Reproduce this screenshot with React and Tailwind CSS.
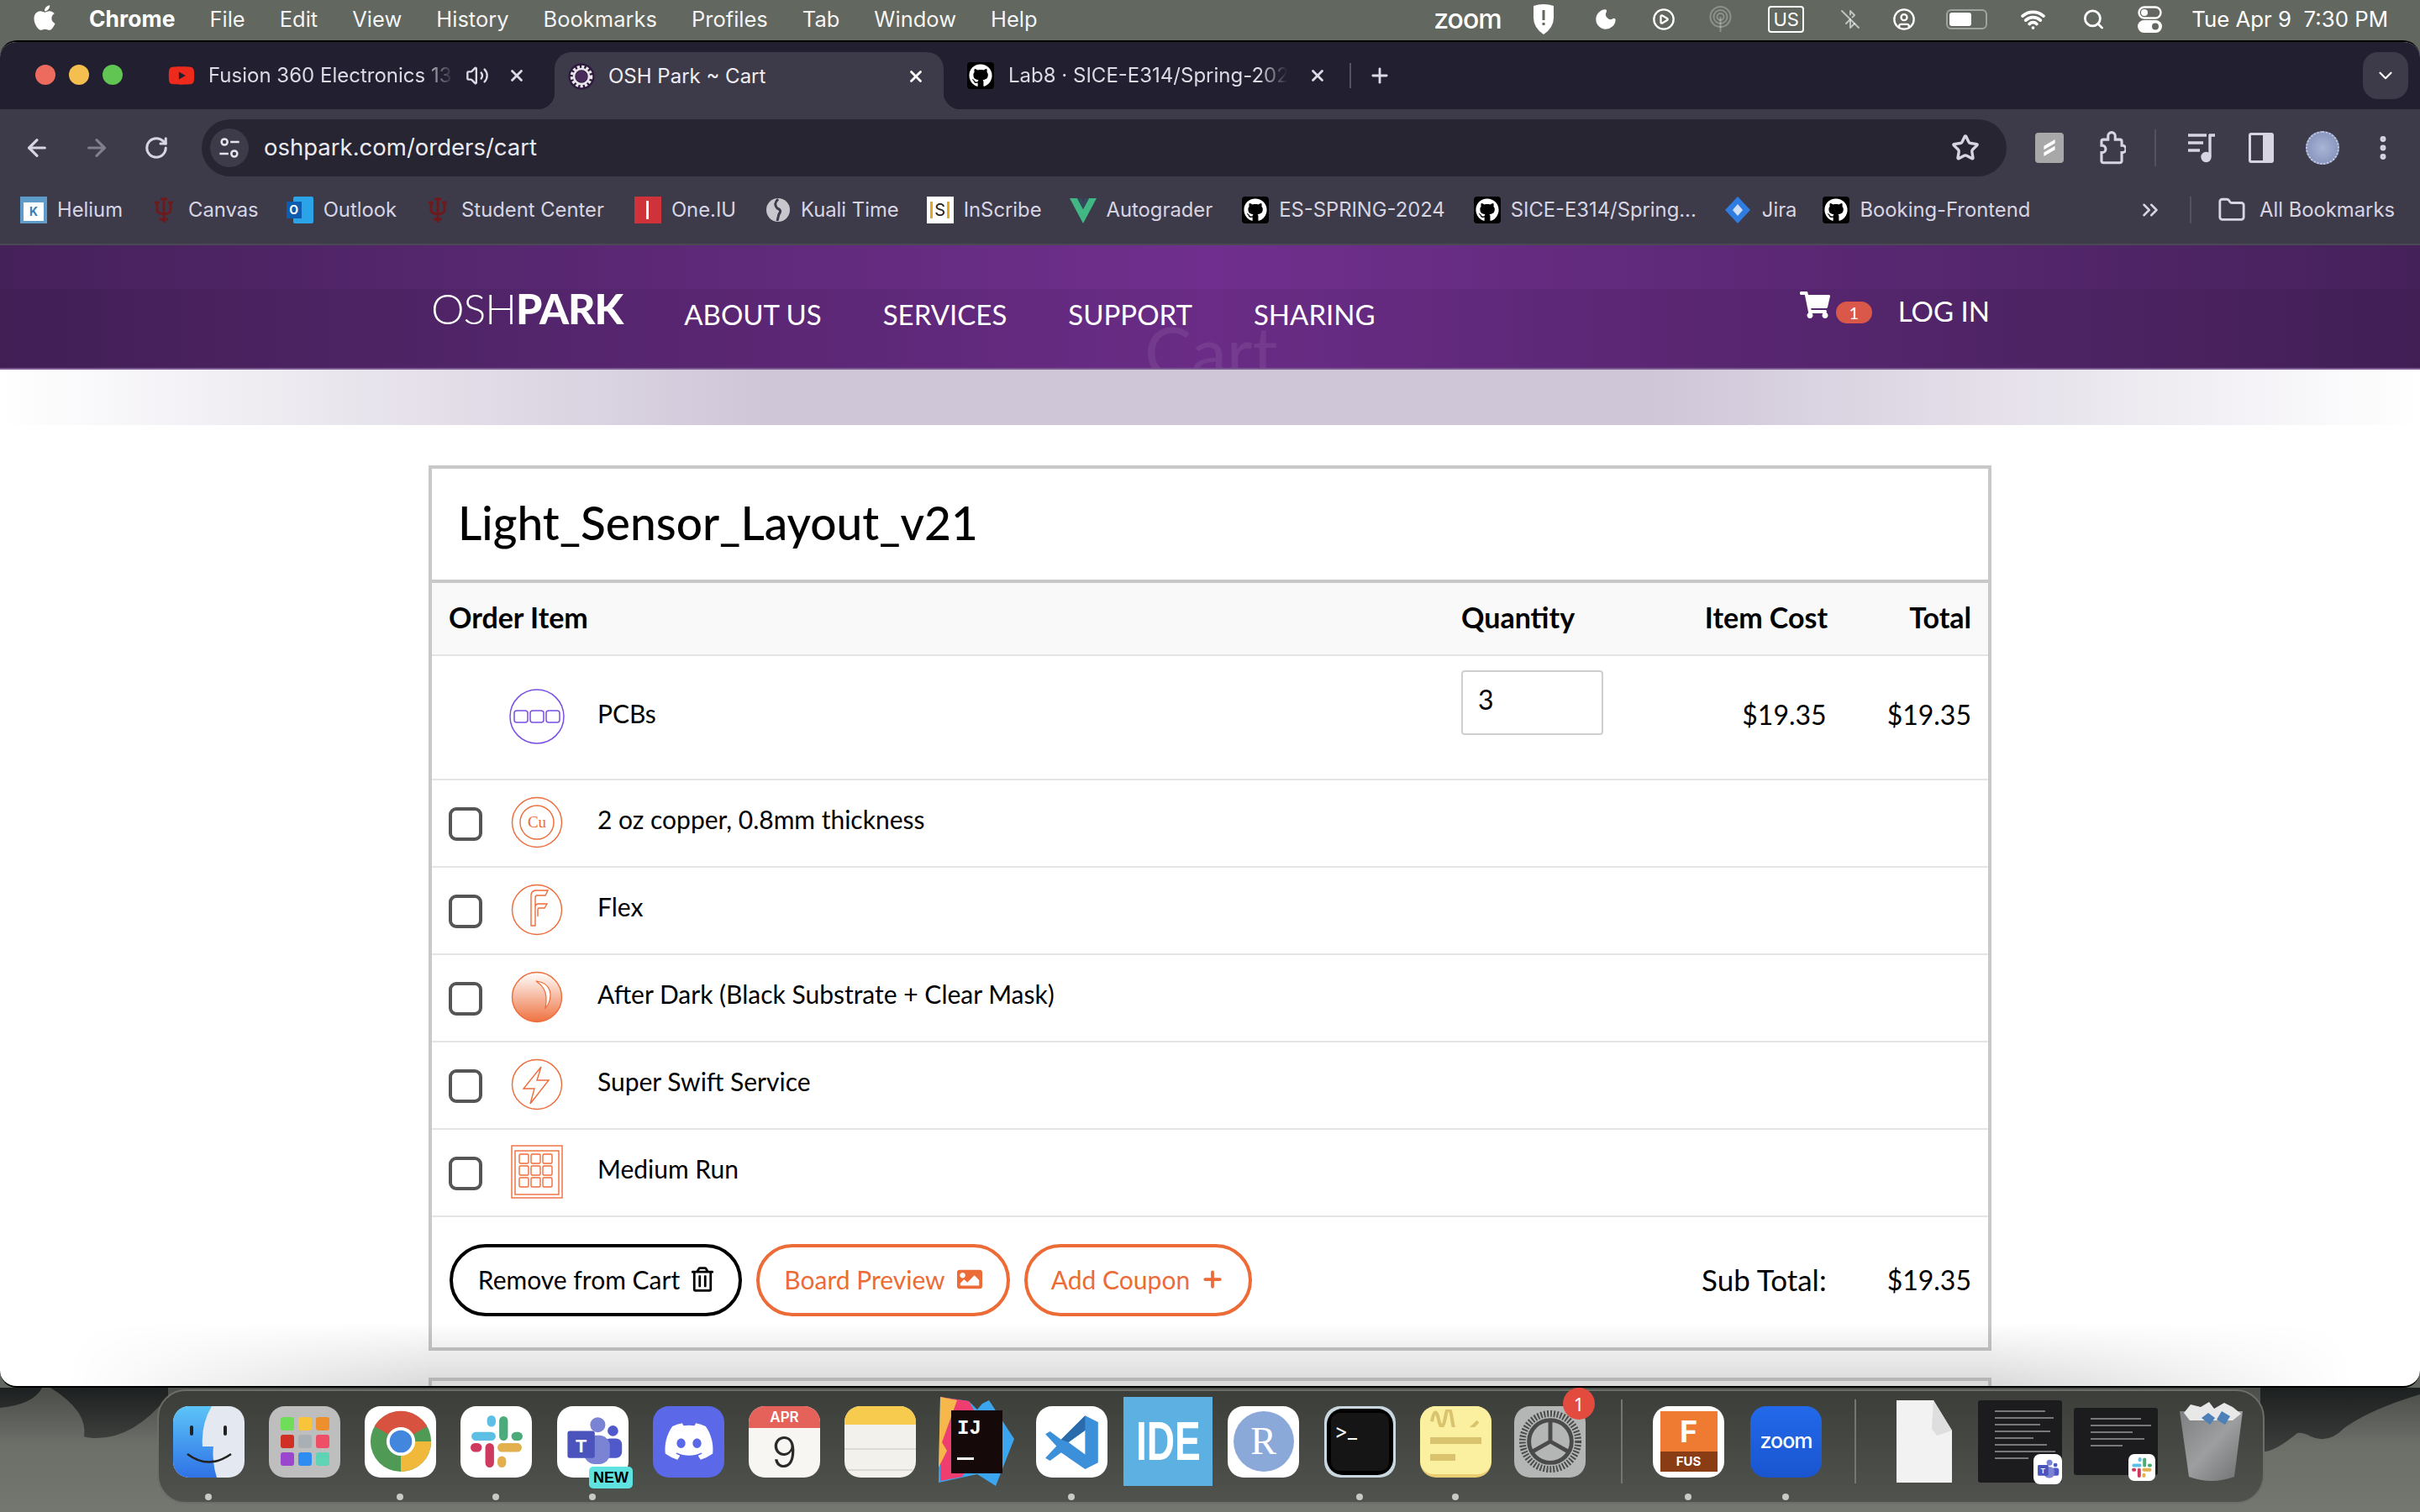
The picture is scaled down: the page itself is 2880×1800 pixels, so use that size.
import React from 'react';
import {
    ArrowLeft,
    ArrowRight,
    RotateCw,
    Star,
    EllipsisVertical,
    ChevronDown,
    ChevronsRight,
    Folder,
    Plus,
    X,
    Volume2,
    Moon,
    CirclePlay,
    CircleUser,
    Wifi,
    Search,
    BluetoothOff
} from 'lucide-react';
import { FaApple, FaGithub, FaDiscord, FaYoutube, FaShoppingCart, FaImage, FaRegTrashAlt } from 'react-icons/fa';

const ui = 'font-["Inter","Liberation_Sans",sans-serif]';
const page = 'font-["Lato","Open_Sans",sans-serif]';

const menuItems = ['File', 'Edit', 'View', 'History', 'Bookmarks', 'Profiles', 'Tab', 'Window', 'Help'];

const GithubFav = () => (
    <span className="w-[32px] h-[32px] rounded-[4px] bg-black flex items-center justify-center shrink-0">
        <FaGithub className="w-[28px] h-[28px] text-white" />
    </span>
);

const Trident = () => (
    <svg viewBox="0 0 24 32" className="w-[24px] h-[32px] shrink-0" fill="none" stroke="#6e1a1d" strokeWidth="3">
        <path d="M12 1v30M7 27h10M4 7v9q0 4 8 5q8-1 8-5V7M1 7h6M17 7h6M8 3h8" />
    </svg>
);

const MenuBar = () => (
    <div className={`h-[48px] bg-[#62675f] flex items-center text-white text-[25.5px] shrink-0 pb-[2px] ${ui}`}>
        <FaApple className="ml-[38px] w-[30px] h-[34px] mb-[4px]" />
        <span className="ml-[38px] text-[26.5px] font-bold">Chrome</span>
        {menuItems.map((label) => (
            <span key={label} className="ml-[41px] text-white/95">{label}</span>
        ))}
        <div className="ml-auto flex items-center">
            <span className="w-[81px] text-[32px] leading-none font-medium tracking-[-1px] whitespace-nowrap">zoom</span>
            <svg viewBox="0 0 26 38" className="ml-[37px] w-[26px] h-[38px]"><path d="M1 3q12-4 24 0v14q0 12-12 20Q1 29 1 17z" fill="#fff" /><rect x="11.5" y="8" width="3" height="12" fill="#62675f" /><rect x="11.5" y="23" width="3" height="3" fill="#62675f" /></svg>
            <Moon className="ml-[47px] w-[28px] h-[30px] fill-white" />
            <CirclePlay className="ml-[41px] w-[28px] h-[30px]" />
            <svg viewBox="0 0 29 32" className="ml-[39px] w-[29px] h-[32px]" fill="none" stroke="#fff" strokeOpacity="0.28" strokeWidth="2">
                <circle cx="14.5" cy="13" r="12" /><circle cx="14.5" cy="13" r="8" /><circle cx="14.5" cy="13" r="4" /><path d="M14.5 13v18" />
            </svg>
            <span className="ml-[42px] w-[43px] h-[32px] border-[2px] border-white rounded-[4px] text-[22px] leading-none flex items-center justify-center">US</span>
            <BluetoothOff className="ml-[43px] w-[24px] h-[30px] text-white/60" />
            <CircleUser className="ml-[38px] w-[28px] h-[30px]" />
            <span className="ml-[36px] w-[49px] h-[24px] rounded-[6px] border-[2px] border-white/40 p-[2px] flex">
                <span className="w-[26px] rounded-[3px] bg-white" />
            </span>
            <Wifi className="ml-[39px] w-[31px] h-[30px]" strokeWidth={3} />
            <Search className="ml-[43px] w-[27px] h-[28px]" strokeWidth={2.5} />
            <svg viewBox="0 0 29 32" className="ml-[39px] w-[29px] h-[32px]">
                <rect x="1.5" y="1.5" width="26" height="13" rx="6.5" fill="none" stroke="#fff" strokeWidth="2.4" />
                <circle cx="8" cy="8" r="4" fill="#fff" />
                <rect x="0" y="17" width="29" height="15" rx="7.5" fill="#fff" />
                <circle cx="21" cy="24.5" r="4" fill="#62675f" />
            </svg>
            <span className="ml-[35px] mr-[38px] text-[25.8px] whitespace-pre">Tue Apr 9  7:30 PM</span>
        </div>
    </div>
);

const TabStrip = () => (
    <div className={`h-[80px] bg-[#211f30] flex text-[#dcdae4] text-[24px] shrink-0 ${ui}`}>
        <div className="flex items-center gap-[16px] ml-[42px] mb-[2px]">
            <span className="w-[24px] h-[24px] rounded-full bg-[#ec6a5e]" />
            <span className="w-[24px] h-[24px] rounded-full bg-[#f4bf4f]" />
            <span className="w-[24px] h-[24px] rounded-full bg-[#61c554]" />
        </div>
        {/* Inactive YouTube tab */}
        <div className="flex items-center ml-[54px] w-[460px]">
            <FaYoutube className="w-[32px] h-[32px] text-[#ee2a1c]" />
            <span className="ml-[16px] w-[292px] overflow-hidden whitespace-nowrap [mask-image:linear-gradient(90deg,black_88%,transparent)]">Fusion 360 Electronics 13</span>
            <Volume2 className="ml-[14px] w-[28px] h-[28px]" />
            <X className="ml-[22px] w-[22px] h-[22px]" strokeWidth={3} />
        </div>
        {/* Active tab */}
        <div className="relative mt-[12px] w-[463px] h-[68px] rounded-t-[20px] bg-[#3d3a4a] flex items-center pl-[16px] pb-[10px]">
            <span className="absolute left-[-20px] bottom-0 w-[20px] h-[20px] bg-[radial-gradient(circle_at_0_0,#211f30_20px,#3d3a4a_20.5px)]" />
            <span className="absolute right-[-20px] bottom-0 w-[20px] h-[20px] bg-[radial-gradient(circle_at_100%_0,#211f30_20px,#3d3a4a_20.5px)]" />
            <svg viewBox="0 0 32 32" className="w-[32px] h-[32px]">
                <circle cx="16" cy="16" r="15.5" fill="#2d1a3d" />
                <circle cx="16" cy="16" r="11.5" fill="none" stroke="#e8e6ea" strokeWidth="3.6" strokeDasharray="3.2 2.2" />
                <circle cx="16" cy="16" r="9" fill="none" stroke="#e8e6ea" strokeWidth="2.6" />
                <circle cx="16" cy="16" r="7" fill="#4a2c5c" />
            </svg>
            <span className="ml-[16px] text-[#f0eef4]">OSH Park ~ Cart</span>
            <X className="ml-auto mr-[22px] w-[22px] h-[22px] text-white" strokeWidth={3} />
        </div>
        {/* GitHub tab */}
        <div className="flex items-center ml-[28px]">
            <GithubFav />
            <span className="ml-[17px] w-[332px] overflow-hidden whitespace-nowrap [mask-image:linear-gradient(90deg,black_90%,transparent)]">Lab8 · SICE-E314/Spring-2024</span>
            <X className="ml-[25px] w-[22px] h-[22px]" strokeWidth={3} />
            <span className="ml-[27px] w-[2px] h-[30px] bg-[#55525f]" />
            <Plus className="ml-[20px] w-[28px] h-[28px]" strokeWidth={2.4} />
        </div>
        <div className="ml-auto mr-[14px] mt-[12px] w-[54px] h-[56px] rounded-[18px] bg-[#3d3a4a] flex items-center justify-center">
            <ChevronDown className="w-[26px] h-[26px] text-white" />
        </div>
    </div>
);

const Toolbar = () => (
    <div className="h-[92px] bg-[#3d3a4a] flex items-center text-[#d8d5e2] shrink-0">
        <ArrowLeft className="ml-[28px] w-[32px] h-[32px]" strokeWidth={2.4} />
        <ArrowRight className="ml-[39px] w-[32px] h-[32px] text-[#827f8c]" strokeWidth={2.4} />
        <RotateCw className="ml-[40px] w-[30px] h-[30px]" strokeWidth={2.4} />
        <div className="ml-[39px] w-[2148px] h-[68px] rounded-full bg-[#282533] flex items-center">
            <span className="ml-[10px] w-[46px] h-[46px] rounded-full bg-[#3d3a4a] flex items-center justify-center">
                <svg viewBox="0 0 24 24" className="w-[28px] h-[28px]" fill="none" stroke="#e4e2ea" strokeWidth="2.2">
                    <circle cx="7" cy="6" r="3" /><path d="M13 6h9M2 18h9" /><circle cx="17" cy="18" r="3" />
                </svg>
            </span>
            <span className={`ml-[18px] text-[27.5px] text-[#ecebf1] ${ui}`}>oshpark.com/orders/cart</span>
            <Star className="ml-auto mr-[32px] w-[34px] h-[34px]" strokeWidth={2.4} />
        </div>
        <span className="ml-[34px] w-[34px] h-[36px] rounded-[4px] bg-[#a8a8a8] flex items-center justify-center">
            <svg viewBox="0 0 20 20" className="w-[22px] h-[26px]"><path d="M16 1 4 8v4l12-7zM16 8 4 15v4l12-7z" fill="#fff" /></svg>
        </span>
        <svg viewBox="0 0 24 28" className="ml-[40px] w-[34px] h-[40px]" fill="none" stroke="currentColor" strokeWidth="2.2">
            <path d="M5 7h4V4a3 3 0 0 1 6 0v3h4a1.5 1.5 0 0 1 1.500 1.500V12h.5a3 3 0 0 1 0 6h-.5v7a1.500 1.500 0 0 1-1.500 1.500H5A1.500 1.500 0 0 1 3.500 25v-7H4a3 3 0 0 0 0-6h-.5V8.500A1.500 1.500 0 0 1 5 7z" />
        </svg>
        <span className="ml-[34px] w-[2px] h-[44px] bg-[#55525f]" />
        <svg viewBox="0 0 32 36" className="ml-[38px] w-[32px] h-[36px]" fill="none" stroke="currentColor" strokeWidth="3.4">
            <path d="M0 3h22M0 12h18M0 21h14M26 2v26" />
            <circle cx="21.500" cy="29" r="4.500" fill="currentColor" />
            <path d="M25 3h7" />
        </svg>
        <span className="ml-[40px] w-[30px] h-[36px] rounded-[3px] border-[3px] border-[#d8d5e2] flex justify-end">
            <span className="w-[10px] bg-[#d8d5e2]" />
        </span>
        <span className="ml-[38px] w-[40px] h-[40px] rounded-full bg-[radial-gradient(circle,#a9b4d6,#7f8cb6)] border-[2px] border-dotted border-[#c7cde2]" />
        <EllipsisVertical className="ml-[34px] w-[36px] h-[36px]" strokeWidth={2.6} />
    </div>
);

const BookmarkText = ({ children, className }) => (
    <span className={`whitespace-nowrap ${className || 'ml-[12px]'}`}>{children}</span>
);

const BookmarksBar = () => (
    <div className={`h-[70px] bg-[#3d3a4a] flex items-center pb-[12px] text-[23.8px] text-[#d8d5e2] border-b-[2px] border-[#4a4852] shrink-0 ${ui}`}>
        <span className="ml-[24px] w-[32px] h-[32px] bg-[#5e9bc9] flex items-end justify-center">
            <span className="w-[24px] h-[22px] mb-[3px] bg-white text-[#3b7eb0] text-[14px] font-bold leading-[22px] text-center">K</span>
        </span>
        <BookmarkText>Helium</BookmarkText>
        <span className="ml-[37px]"><Trident /></span>
        <BookmarkText className="ml-[17px]">Canvas</BookmarkText>
        <span className="ml-[33px] w-[32px] h-[32px] flex items-center relative">
            <span className="absolute right-0 top-0 w-[24px] h-[32px] bg-[#2ba3e8] rounded-[2px]" />
            <span className="relative w-[18px] h-[20px] bg-[#0c5cb0] text-white text-[14px] font-bold text-center leading-[20px]">O</span>
        </span>
        <BookmarkText>Outlook</BookmarkText>
        <span className="ml-[37px]"><Trident /></span>
        <BookmarkText className="ml-[16px]">Student Center</BookmarkText>
        <span className="ml-[36px] w-[32px] h-[32px] bg-[#cf3238] flex items-center justify-center">
            <span className="w-[3px] h-[22px] bg-white" />
        </span>
        <BookmarkText>One.IU</BookmarkText>
        <svg viewBox="0 0 30 32" className="ml-[35px] w-[30px] h-[32px]"><circle cx="15" cy="16" r="14" fill="#c9c7ce" /><path d="M15 3q-6 6-1 11q6 2 2 7l-2 8" stroke="#3d3a4a" strokeWidth="3" fill="none" /></svg>
        <BookmarkText>Kuali Time</BookmarkText>
        <span className="ml-[33px] w-[32px] h-[32px] bg-white flex items-center justify-center text-[#222] text-[20px] leading-none">
            <span className="border-x-[3px] border-[#e2a82c] px-[2px]">S</span>
        </span>
        <BookmarkText>InScribe</BookmarkText>
        <svg viewBox="0 0 32 32" className="ml-[33px] w-[32px] h-[32px]"><path d="M0 2h9l7 13 7-13h9L16 32z" fill="#41b883" /><path d="M9 2h5l2 4 2-4h5l-7 13z" fill="#35495e" /></svg>
        <BookmarkText>Autograder</BookmarkText>
        <span className="ml-[35px]"><GithubFav /></span>
        <BookmarkText>ES-SPRING-2024</BookmarkText>
        <span className="ml-[34px]"><GithubFav /></span>
        <BookmarkText>SICE-E314/Spring...</BookmarkText>
        <svg viewBox="0 0 30 32" className="ml-[34px] w-[30px] h-[32px]"><path d="M15 0l15 16-15 16L0 16z" fill="#2f7de1" /><path d="M15 9l6 7-6 7-6-7z" fill="#cfe0f7" /></svg>
        <BookmarkText className="ml-[14px]">Jira</BookmarkText>
        <span className="ml-[31px]"><GithubFav /></span>
        <BookmarkText>Booking-Frontend</BookmarkText>
        <ChevronsRight className="ml-auto w-[30px] h-[30px]" />
        <span className="ml-[32px] w-[2px] h-[32px] bg-[#55525f]" />
        <Folder className="ml-[31px] w-[34px] h-[34px]" strokeWidth={2} />
        <BookmarkText className="ml-[16px] mr-[30px]">All Bookmarks</BookmarkText>
    </div>
);

const SiteHeader = () => (
    <div className={`relative h-[148px] shrink-0 overflow-hidden flex flex-col bg-[linear-gradient(90deg,#45215a_0%,#702f8e_50%,#45215a_100%)] border-b-[2px] border-[#7a5a90] text-white ${page}`}>
        <div className="h-[52px] shrink-0" />
        <div className="flex-1 bg-black/5 pl-[513px] pr-[512px] flex items-start">
            <span className="mt-[-5px] text-[50px] leading-[56px] tracking-[-1px] font-light">
                OSH<span className="font-black">PARK</span>
            </span>
            <span className="ml-[73px] mt-[7px] text-[33px] leading-[46px]">ABOUT US</span>
            <span className="ml-[73px] mt-[7px] text-[33px] leading-[46px]">SERVICES</span>
            <span className="ml-[73px] mt-[7px] text-[33px] leading-[46px]">SUPPORT</span>
            <span className="ml-[73px] mt-[7px] text-[33px] leading-[46px]">SHARING</span>
            <FaShoppingCart className="ml-auto mt-[3px] w-[36px] h-[32px]" />
            <span className="ml-[7px] mt-[15px] w-[43px] h-[26px] rounded-full bg-[#d9584a] text-[20px] leading-[26px] text-center">1</span>
            <span className="ml-[31px] mt-[3px] text-[33px] leading-[46px]">LOG IN</span>
        </div>
        <span className="absolute left-[1362px] top-[84px] text-[84px] leading-none text-white/[0.07]">Cart</span>
    </div>
);

const FadeBand = () => (
    <div className="h-[66px] shrink-0 bg-[linear-gradient(90deg,#ffffff_0%,#cfc6d8_32%,#cfc6d8_68%,#ffffff_100%)]" />
);

const Circle = ({ children }) => (
    <svg viewBox="0 0 66 66" className="w-[66px] h-[66px]" fill="none" stroke="#ee6c39" strokeWidth="1.4">
        <circle cx="33" cy="33" r="29.5" />
        {children}
    </svg>
);

const PcbIcon = () => (
    <svg viewBox="0 0 66 66" className="w-[66px] h-[66px]" fill="none" stroke="#7a4fe4" strokeWidth="1.5">
        <circle cx="33" cy="33" r="32" />
        <rect x="6" y="26" width="16" height="14" rx="3" />
        <rect x="25" y="26" width="16" height="14" rx="3" />
        <rect x="44" y="26" width="16" height="14" rx="3" />
    </svg>
);

const CopperIcon = () => (
    <Circle>
        <circle cx="33" cy="33" r="20" />
        <text x="33" y="39" textAnchor="middle" fontFamily="Liberation Serif, serif" fontSize="19" fill="#ee6c39" stroke="none">Cu</text>
    </Circle>
);

const FlexIcon = () => (
    <Circle>
        <path d="M26 52V16q0-5 5-6h15l-3 6H33q-2 0-2 3v33zM31 30q0-4 4-4h10l-3 5h-7q-1 0-1 2v8" />
    </Circle>
);

const AfterDarkIcon = () => (
    <svg viewBox="0 0 66 66" className="w-[66px] h-[66px]">
        <defs>
            <linearGradient id="afterDark" x1="0" y1="0" x2="0" y2="1">
                <stop offset="0" stopColor="#fff" />
                <stop offset="1" stopColor="#ee7240" />
            </linearGradient>
        </defs>
        <circle cx="33" cy="33" r="29.5" fill="url(#afterDark)" stroke="#ee6c39" strokeWidth="1.4" />
        <path d="M32 14q16 2 17 16q0 10-6 16q3-14-2-23q-3-5-9-9z" fill="#fff" stroke="#ee6c39" strokeWidth="1.2" />
    </svg>
);

const SwiftIcon = () => (
    <Circle>
        <path d="M38 12 17 38h13l-5 18 22-28H33z" />
    </Circle>
);

const MediumRunIcon = () => (
    <svg viewBox="0 0 66 66" className="w-[66px] h-[66px]" fill="none" stroke="#ee6c39" strokeWidth="1.4">
        <rect x="3" y="2" width="60" height="62" />
        <rect x="7" y="8" width="52" height="52" />
        {[12, 26, 40].map((y) => [12, 26, 40].map((x) => (
            <rect key={`${x}-${y}`} x={x} y={y} width="11" height="11" rx="1.5" />
        )))}
    </svg>
);

const options = [
    { label: '2 oz copper, 0.8mm thickness', Icon: CopperIcon },
    { label: 'Flex', Icon: FlexIcon },
    { label: 'After Dark (Black Substrate + Clear Mask)', Icon: AfterDarkIcon },
    { label: 'Super Swift Service', Icon: SwiftIcon },
    { label: 'Medium Run', Icon: MediumRunIcon }
];

const OptionRow = ({ label, Icon }) => (
    <div className="h-[104px] border-t-[2px] border-[#e4e4e4] flex items-center pl-[20px]">
        <span className="mt-[2px] w-[40px] h-[40px] rounded-[9px] border-[4px] border-[#555] bg-white shrink-0" />
        <span className="ml-[32px] mb-[2px] flex"><Icon /></span>
        <span className="ml-[39px] mb-[9px] text-[30px] text-black">{label}</span>
    </div>
);

const CartCard = () => (
    <div className={`w-[1860px] mx-auto border-[4px] border-[#c8c8c8] bg-white text-black ${page}`}>
        <div className="h-[136px] border-b-[4px] border-[#c8c8c8] flex items-center pl-[31px] pb-[4px]">
            <h1 className="text-[55px] font-medium leading-none">Light_Sensor_Layout_v21</h1>
        </div>
        <div className="h-[85px] bg-[#f9f9f9] flex items-center text-[34px] font-bold pl-[20px] pb-[4px]">
            <span className="w-[1205px]">Order Item</span>
            <span>Quantity</span>
            <span className="ml-auto mr-[97px]">Item Cost</span>
            <span className="mr-[20px]">Total</span>
        </div>
        {/* PCB row */}
        <div className="h-[148px] border-t-[2px] border-[#e4e4e4] flex">
            <div className="w-[1225px] pl-[92px] flex">
                <span className="mt-[39px] flex"><PcbIcon /></span>
                <span className="ml-[39px] mt-[48px] text-[30px] leading-[40px]">PCBs</span>
            </div>
            <div className="mt-[17px] w-[169px] h-[77px] rounded-[4px] border-[2px] border-[#cfcfcf] text-[32px] leading-[66px] pl-[18px]">3</div>
            <span className="ml-auto mr-[72px] mt-[48px] text-[32px] leading-[44px]">$19.35</span>
            <span className="mr-[20px] mt-[48px] text-[32px] leading-[44px]">$19.35</span>
        </div>
        {options.map((option) => (
            <OptionRow key={option.label} {...option} />
        ))}
        {/* Footer */}
        <div className="h-[157px] border-t-[2px] border-[#e4e4e4] flex items-center pl-[21px] pb-[5px] text-[30px]">
            <button className="w-[348px] h-[86px] rounded-full border-[4px] border-black flex items-center justify-center pb-[2px]">
                Remove from Cart
                <FaRegTrashAlt className="ml-[14px] w-[26px] h-[30px]" />
            </button>
            <button className="ml-[17px] w-[302px] h-[86px] rounded-full border-[4px] border-[#ec6b36] text-[#ec6b36] flex items-center justify-center pb-[2px]">
                Board Preview
                <FaImage className="ml-[14px] w-[30px] h-[30px]" />
            </button>
            <button className="ml-[17px] w-[271px] h-[86px] rounded-full border-[4px] border-[#ec6b36] text-[#ec6b36] flex items-center justify-center pb-[2px]">
                Add Coupon
                <Plus className="ml-[12px] w-[30px] h-[30px]" strokeWidth={3} />
            </button>
            <span className="ml-auto mr-[72px] mb-[2px] text-[35px]">Sub Total:</span>
            <span className="mr-[20px] text-[32px]">$19.35</span>
        </div>
    </div>
);

const Browser = () => (
    <div className="relative h-[1604px] shrink-0 rounded-t-[20px] rounded-b-[20px] overflow-hidden border-y-[2px] border-black bg-white flex flex-col z-10">
        <TabStrip />
        <Toolbar />
        <BookmarksBar />
        <SiteHeader />
        <FadeBand />
        <div className="pt-[48px] flex flex-col">
            <CartCard />
            <div className="mt-[32px] w-[1860px] h-[40px] mx-auto border-[4px] border-[#d2d2d2]" />
        </div>
        {/* Dock shadow over the page */}
        <div className="absolute left-[80px] right-[80px] bottom-0 h-[76px] bg-gradient-to-b from-transparent to-black/15 [mask-image:linear-gradient(90deg,transparent,black_16%,black_84%,transparent)]" />
    </div>
);

const Tile = ({ className, children, dot, extra }) => (
    <div className={`relative shrink-0 w-[85px] h-[85px] ${className || ''}`}>
        <div className="w-full h-full overflow-hidden rounded-[19px] flex items-center justify-center">{children}</div>
        {extra}
        {dot && <span className="absolute left-[38px] top-[104px] w-[8px] h-[8px] rounded-full bg-[#c8cac5]" />}
    </div>
);

const launchColors = ['#6fdc5a', '#f8c43c', '#ee8f2e', '#cf2f24', '#a9b0b5', '#ee4e66', '#9a46cf', '#2f8df2', '#5fd4b4'];

const SlackMark = ({ className }) => (
    <svg viewBox="0 0 60 60" className={className} strokeLinecap="round" strokeWidth="10" fill="none">
        <path d="M24 5v3M6 24h18" stroke="#5ebfe6" />
        <path d="M38 6v18M55 24h-3" stroke="#4cab7a" />
        <path d="M36 55v-3M54 37H36" stroke="#e3b04f" />
        <path d="M22 37v18M5 37h3" stroke="#ce3a5d" />
    </svg>
);

const TeamsMark = ({ className }) => (
    <svg viewBox="0 0 80 80" className={className}>
        <circle cx="46" cy="18" r="10" fill="#7b83d4" /><circle cx="66" cy="26" r="7" fill="#5059c9" />
        <rect x="54" y="36" width="24" height="26" rx="8" fill="#5059c9" />
        <rect x="28" y="32" width="34" height="38" rx="14" fill="#7b83d4" />
        <rect x="6" y="26" width="36" height="36" rx="3" fill="#4b53bc" />
        <text x="24" y="54" textAnchor="middle" fill="#fff" fontSize="24" fontWeight="700" fontFamily="Liberation Sans, sans-serif">T</text>
    </svg>
);

const ChatLines = ({ widths }) => (
    <div className="pl-[20px] pt-[12px] pr-[6px] flex flex-col gap-[6px]">
        {widths.map((width) => (
            <span key={width} className={`${width} h-[2px] bg-[#77797c]`} />
        ))}
    </div>
);

const Dock = () => (
    <div className="relative flex-1 pt-[2px] pl-[187px] pr-[185px] bg-[linear-gradient(180deg,#4a4d48_0%,#6b6f68_45%,#73776f_100%)]">
        {/* Wallpaper leaves behind the dock */}
        <svg viewBox="0 0 2880 146" className="absolute left-0 top-0 w-[2880px] h-[146px]">
            <defs>
                <linearGradient id="leaf" x1="0" y1="0" x2="0" y2="1">
                    <stop offset="0" stopColor="#1d2020" />
                    <stop offset="1" stopColor="#3c3f3c" />
                </linearGradient>
            </defs>
            <path fill="url(#leaf)" d="M0 0h50Q40 20 0 24zM60 0h140v10q-40 50-85 50q-10 0-15-2q5-30-40-58z" />
            <path fill="url(#leaf)" d="M2690 0h190v8q-60 18-90 40q-20 20-40 10q-10-5-16-4q-30 25-44 22z" />
        </svg>
        <div className="relative h-[136px] rounded-[34px] border-[2px] border-[#6c6e69] bg-[linear-gradient(180deg,#3c3e3a,#50524d)] flex items-center pb-[12px]">
            <Tile className="ml-[17px]" dot>
                <svg viewBox="0 0 85 85" className="w-full h-full">
                    <defs>
                        <linearGradient id="finderBlue" x1="0" y1="0" x2="0" y2="1"><stop offset="0" stopColor="#5cc4f8" /><stop offset="1" stopColor="#2f72e6" /></linearGradient>
                    </defs>
                    <rect width="85" height="85" fill="#e4e8f0" />
                    <path d="M0 0h46q-13 22-11 48h13q-2 18 4 37H0z" fill="url(#finderBlue)" />
                    <path d="M22 25v8M62 25v8" stroke="#222" strokeWidth="4" strokeLinecap="round" />
                    <path d="M17 57q25 19 52 0" stroke="#222" strokeWidth="2.6" fill="none" />
                </svg>
            </Tile>
            <Tile className="ml-[29px] bg-[#bdbebd] rounded-[19px]">
                <div className="grid grid-cols-3 gap-[5px]">
                    {launchColors.map((color) => (
                        <svg key={color} viewBox="0 0 16 16" className="w-[16px] h-[16px]"><rect width="16" height="16" rx="3" fill={color} /></svg>
                    ))}
                </div>
            </Tile>
            <Tile className="ml-[29px] bg-white rounded-[19px]" dot>
                <svg viewBox="0 0 80 80" className="w-[76px] h-[76px]">
                    <circle cx="40" cy="40" r="38" fill="#4f9a55" />
                    <path d="M40 40 7 21a38 38 0 0 1 66 0z" fill="#d8533f" />
                    <path d="M40 40h38a38 38 0 0 1-38 38z" fill="#f1b93c" />
                    <circle cx="40" cy="40" r="18" fill="#fff" />
                    <circle cx="40" cy="40" r="14" fill="#4286de" />
                </svg>
            </Tile>
            <Tile className="ml-[29px] bg-white rounded-[19px]" dot>
                <SlackMark className="w-[62px] h-[62px]" />
            </Tile>
            <Tile
                className="ml-[30px] bg-white rounded-[19px]"
                dot
                extra={<span className="absolute left-[38px] top-[72px] w-[52px] h-[26px] rounded-[5px] bg-[#5fe3e0] text-black text-[18px] font-bold leading-[26px] text-center font-['Liberation_Sans',sans-serif]">NEW</span>}
            >
                <TeamsMark className="w-[72px] h-[72px]" />
            </Tile>
            <Tile className="ml-[29px] bg-[#5b68e8] rounded-[19px]">
                <FaDiscord className="w-[62px] h-[62px] text-white" />
            </Tile>
            <Tile className="ml-[29px] bg-[#f7f6f3] rounded-[19px]">
                <div className={`w-full h-full flex flex-col ${ui}`}>
                    <span className="h-[26px] bg-[#e5625a] text-white text-[17px] font-semibold leading-[26px] text-center">APR</span>
                    <span className="flex-1 text-[50px] leading-[58px] font-light text-[#2a2a2a] text-center">9</span>
                </div>
            </Tile>
            <Tile className="ml-[29px] bg-[#f3f1ec] rounded-[19px]">
                <div className="w-full h-full flex flex-col">
                    <span className="h-[22px] bg-[#f6cb4e]" />
                    <span className="h-[30px] border-b-[2px] border-[#dcdad4]" />
                    <span className="h-[25px] border-b-[2px] border-[#dcdad4]" />
                </div>
            </Tile>
            <svg viewBox="0 0 96 106" className="ml-[23px] w-[96px] h-[106px] shrink-0">
                <path d="M6 0l34 5 10 10L56 8l8-4 30 46-22 56-22-14-46 10z" fill="#3ba5ef" />
                <path d="M6 0l34 5 22 40-30 50-26 5z" fill="#ee3d6e" />
                <path d="M6 0l20 4-18 50 6 10-10 20z" fill="#f6b84a" />
                <rect x="19" y="16" width="61" height="75" fill="#16090a" />
                <text x="26" y="44" fill="#fff" fontSize="24" fontWeight="700" fontFamily="Liberation Mono, monospace">IJ</text>
                <rect x="26" y="72" width="20" height="3" fill="#fff" />
            </svg>
            <Tile className="ml-[24px] bg-white rounded-[19px]" dot>
                <svg viewBox="0 0 60 60" className="w-[66px] h-[66px]">
                    <path d="M44 2 18 28 6 19l-5 3 12 13L1 48l5 3 12-9 26 18 14-7V9z" fill="#3c8fd9" />
                    <path d="M44 18v26L26 31z" fill="#fff" />
                    <path d="M44 2v16L26 31l-8-3z" fill="#2a6cab" />
                </svg>
            </Tile>
            <div className="ml-[19px] w-[106px] h-[106px] shrink-0 bg-[#5cb0e2] flex items-center justify-center text-white text-[64px] font-bold font-['Liberation_Sans',sans-serif]">
                <span className="scale-x-[0.72]">IDE</span>
            </div>
            <Tile className="ml-[18px] bg-white rounded-[19px]">
                <span className="w-[72px] h-[72px] rounded-full bg-[#8aa8d8] text-white text-[46px] leading-[72px] text-center font-['Liberation_Serif',serif]">R</span>
            </Tile>
            <Tile className="ml-[30px] bg-[#c9d8e0] rounded-[19px] p-[3px]" dot>
                <div className={`w-full h-full rounded-[15px] bg-[#151515] border-[5px] border-black text-white text-[24px] leading-none pl-[4px] pt-[10px] ${ui}`}>&gt;_</div>
            </Tile>
            <Tile className="ml-[29px] bg-[#e9cd72] rounded-[19px]" dot>
                <div className="w-full h-full bg-[#fbf0a0] rounded-b-[16px] flex flex-col gap-[12px] justify-end pb-[16px] px-[12px] mb-[8px]">
                    <svg viewBox="0 0 60 20" className="w-full"><path d="M2 14q4-20 8-2t8-4 8 6 30 0" stroke="#d9c36e" strokeWidth="4" fill="none" /></svg>
                    <span className="h-[8px] bg-[#d9c36e]" />
                    <span className="h-[8px] w-[30px] bg-[#d9c36e]" />
                </div>
            </Tile>
            <Tile
                className="ml-[27px] bg-[#b4b6b6] rounded-[19px]"
                extra={<span className="absolute left-[58px] top-[-22px] w-[38px] h-[38px] rounded-full bg-[#e34b3f] text-white text-[22px] leading-[38px] text-center">1</span>}
            >
                <svg viewBox="0 0 80 80" className="w-[78px] h-[78px]" fill="none" stroke="#4a4a4a">
                    <circle cx="40" cy="40" r="34" strokeWidth="8" strokeDasharray="2 2" />
                    <circle cx="40" cy="40" r="26" strokeWidth="5" />
                    <path d="M40 40V16M40 40 19 52M40 40l21 12" strokeWidth="5" />
                </svg>
            </Tile>
            <span className="ml-[42px] w-[2px] h-[100px] bg-[#74766f] shrink-0" />
            <Tile className="ml-[36px] bg-white rounded-[19px]" dot>
                <div className={`w-[68px] h-[72px] flex flex-col font-bold ${ui}`}>
                    <span className="flex-1 bg-[#ef7a32] text-white text-[36px] leading-[48px] text-center">F</span>
                    <span className="h-[24px] bg-[#8a3d14] text-white text-[15px] leading-[24px] text-center">FUS</span>
                </div>
            </Tile>
            <Tile className="ml-[31px] bg-[linear-gradient(180deg,#2269ea,#1a55cf)] rounded-[19px]" dot>
                <span className={`text-white text-[25px] font-medium tracking-[-1px] ${ui}`}>zoom</span>
            </Tile>
            <span className="ml-[39px] w-[2px] h-[100px] bg-[#74766f] shrink-0" />
            <svg viewBox="0 0 66 98" className="ml-[48px] w-[66px] h-[98px] shrink-0">
                <path d="M0 0h44l22 36v62H0z" fill="#f2f2f2" />
                <path d="M44 0l22 36-18 6-6-8z" fill="#dedede" />
            </svg>
            <div className="relative ml-[31px] w-[100px] h-[98px] shrink-0 rounded-[3px] bg-[#1c1c1e]">
                <ChatLines widths={['w-[60px]', 'w-[70px]', 'w-[54px]', 'w-[66px]', 'w-[46px]', 'w-[62px]', 'w-[72px]', 'w-[40px]']} />
                <span className="absolute right-0 bottom-[-2px] w-[34px] h-[36px] rounded-[8px] bg-white flex items-center justify-center">
                    <TeamsMark className="w-[28px] h-[28px]" />
                </span>
            </div>
            <div className="relative ml-[14px] w-[100px] h-[80px] shrink-0 rounded-[3px] bg-[#1c1c1e]">
                <ChatLines widths={['w-[60px]', 'w-[72px]', 'w-[50px]', 'w-[64px]', 'w-[38px]']} />
                <span className="absolute right-[3px] bottom-[-7px] w-[32px] h-[32px] rounded-[7px] bg-white flex items-center justify-center">
                    <SlackMark className="w-[24px] h-[24px]" />
                </span>
            </div>
            <svg viewBox="0 0 75 96" className="ml-[26px] w-[75px] h-[96px] shrink-0">
                <defs>
                    <linearGradient id="trashGlass" x1="0" y1="0" x2="1" y2="1"><stop offset="0" stopColor="#7d7f80" /><stop offset="0.5" stopColor="#9c9e9f" /><stop offset="1" stopColor="#6e7071" /></linearGradient>
                </defs>
                <path d="M0 12h75l-10 78q-27 10-54 0z" fill="url(#trashGlass)" />
                <path d="M5 14l8-10 12 3 10-6 6 8 12-7 10 5 10 8-10 8H12z" fill="#e8e8e8" />
                <path d="M26 20l8-6 8 6-6 8zM44 22l6-10 10 6-6 10z" fill="#4d7fb8" />
            </svg>
        </div>
    </div>
);

const App = () => (
    <div className="w-[2880px] h-[1800px] overflow-hidden flex flex-col bg-[#62675f]">
        <MenuBar />
        <Browser />
        <Dock />
    </div>
);

export default App;
